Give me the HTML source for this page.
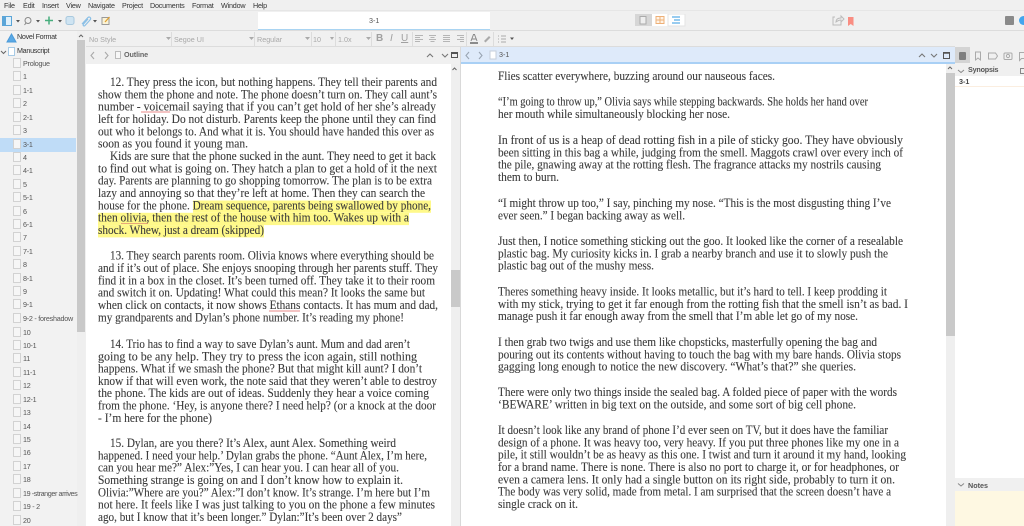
<!DOCTYPE html>
<html><head><meta charset="utf-8"><style>
html,body{margin:0;padding:0;width:1024px;height:526px;overflow:hidden;background:#f0f0f0;font-family:"Liberation Sans",sans-serif;color:#444}
#wrap{position:absolute;left:0;top:0;width:1024px;height:526px;overflow:hidden;background:#f0f0f0;filter:blur(.3px)}
.a{position:absolute}
#menu span{position:absolute;top:1px;font-size:7.2px;color:#333;line-height:9px;letter-spacing:-.2px}
#binder div{position:absolute;left:23px;font-size:7.2px;color:#555;line-height:10px;white-space:nowrap;letter-spacing:-.25px}
#binder div:before{content:"";position:absolute;left:-10px;top:-1px;width:6px;height:8px;border:1px solid #d2d2d2;background:#f6f6f6}
.fb{position:absolute;top:35px;font-size:7.2px;color:#a8a8a8;line-height:9px}
svg text{font-family:"Liberation Serif",serif;font-size:12.4px;fill:#3a3a3a;stroke:#3a3a3a;stroke-width:.1px}
.sep{position:absolute;top:32px;height:14px;width:1px;background:#dcdcdc}
</style></head><body><div id="wrap">
<div id="menu">
<span style="left:4px">File</span><span style="left:23px">Edit</span><span style="left:42px">Insert</span><span style="left:66px">View</span><span style="left:88px">Navigate</span><span style="left:122px">Project</span><span style="left:150px">Documents</span><span style="left:192px">Format</span><span style="left:221px">Window</span><span style="left:253px">Help</span>
</div>
<div class="a" style="left:0;top:10px;width:1024px;height:1px;background:#e6e6e6"></div>
<div class="a" style="left:0;top:30px;width:1024px;height:1px;background:#dcdcdc"></div>
<div class="a" style="left:258px;top:12px;width:232px;height:17px;background:#fff;border-bottom:1px solid #a9d4f2"></div>
<div class="a" style="left:369px;top:16px;font-size:7.2px;color:#555">3-1</div>
<!-- toolbar icons -->
<svg class="a" style="left:0;top:11px" width="120" height="20" viewBox="0 0 120 20">
<rect x="2.500" y="5.500" width="9" height="9" fill="#dff0fb" stroke="#5aa5d8"/><rect x="3" y="6" width="3" height="8" fill="#5aa5d8"/>
<path d="M16 9h4l-2 2.500z" fill="#555"/>
<circle cx="28" cy="9.500" r="3" fill="none" stroke="#888"/><path d="M26 12l-1.500 2" stroke="#888"/>
<path d="M36 9h4l-2 2.500z" fill="#555"/>
<path d="M49 5.500v8M45 9.500h8" stroke="#47ad7d" stroke-width="1.500"/>
<path d="M58 9h4l-2 2.500z" fill="#555"/>
<rect x="66" y="5.500" width="8" height="8" rx="2" fill="#cfe4f2" stroke="#a9c9de"/>
<path d="M82 13l6-6.500c2-1.500 3.500 1 2 2.500l-5 5.500c-1 1-2.500 0-1.500-1.500l4.500-5" fill="none" stroke="#8cc0e6" stroke-width="1.200"/>
<path d="M93 9h4l-2 2.500z" fill="#555"/>
<rect x="102" y="6.500" width="7" height="7" fill="#fbf3d5" stroke="#999"/><path d="M105 11l4.500-5" stroke="#e0a030" stroke-width="1.300"/>
</svg>
<svg class="a" style="left:635px;top:14px" width="52" height="13" viewBox="0 0 52 13">
<rect width="17" height="12" fill="#d6d6d6"/><rect x="17" width="16" height="12" fill="#fff"/><rect x="33" width="17" height="12" fill="#fff" stroke="#e3e3e3"/>
<rect x="5" y="2.500" width="6" height="7.500" fill="#eee" stroke="#aaa"/>
<rect x="21" y="2.500" width="8" height="7" fill="#fff3e6" stroke="#eeb078"/><path d="M25 2.500v7M21 6h8" stroke="#eeb078"/>
<path d="M37 3h8M39 6h6M37 9h8" stroke="#5aaee8" stroke-width="1.200"/>
</svg>
<svg class="a" style="left:830px;top:14px" width="28" height="14" viewBox="0 0 28 14">
<path d="M5 3H3v8h8V8M6 8c0-3 2-4 5-4V2l3 3-3 3V6c-2 0-3 .5-5 2z" fill="none" stroke="#bbb"/>
<path d="M18 3h5.500v9l-2.750-2-2.750 2z" fill="#f98d82"/>
</svg>
<div class="a" style="left:1005px;top:16px;width:9px;height:9px;background:#8a8a8a;border-radius:1px"></div>
<div class="a" style="left:1019px;top:16px;width:9px;height:9px;background:#43a5ee;border-radius:50%"></div>
<!-- format bar -->
<div class="a" style="left:86px;top:31px;width:869px;height:15px;background:#f0f0f0;border-bottom:1px solid #dcdcdc"></div>
<span class="fb" style="left:89px">No Style</span><span class="fb" style="left:174px">Segoe UI</span><span class="fb" style="left:257px">Regular</span><span class="fb" style="left:313px">10</span><span class="fb" style="left:338px">1.0x</span>
<div class="sep" style="left:171px"></div><div class="sep" style="left:254px"></div><div class="sep" style="left:311px"></div><div class="sep" style="left:335px"></div><div class="sep" style="left:371px"></div><div class="sep" style="left:412px"></div><div class="sep" style="left:466px"></div><div class="sep" style="left:493px"></div>
<svg class="a" style="left:160px;top:34px" width="220" height="10" viewBox="0 0 220 10">
<path d="M6 3h5l-2.500 3zM89 3h5l-2.500 3zM145 3h5l-2.500 3zM170 3h4l-2 3zM206 3h5l-2.500 3z" fill="#aaa"/>
</svg>
<span class="a" style="left:376px;top:33px;font-size:10px;font-weight:bold;color:#a0a0a0">B</span>
<span class="a" style="left:390px;top:33px;font-size:10px;font-style:italic;color:#a0a0a0">I</span>
<span class="a" style="left:401px;top:33px;font-size:10px;text-decoration:underline;color:#a0a0a0">U</span>
<svg class="a" style="left:414px;top:32px" width="100" height="14" viewBox="0 0 100 14">
<path d="M1 3.500h8M1 5.500h5M1 7.500h8M1 9.500h5M15 3.500h7M16.500 5.500h4M15 7.500h7M16.500 9.500h4M29 3.500h7M29 5.500h7M29 7.500h7M29 9.500h7M43 3.500h7M46 5.500h4M43 7.500h7M46 9.500h4" stroke="#b5b5b5"/>
<path d="M57 9l2.500-6.500h1L63 9M58 7h4" fill="none" stroke="#888"/><path d="M56 11h8" stroke="#555" stroke-width="1.300"/>
<path d="M70 9l5-5 1.500 1.500-5 5z" fill="#aaa"/>
<path d="M84 4h1M87 4h5M84 7h1M87 7h5M84 10h1M87 10h5" stroke="#aaa"/><path d="M96 5.500h4l-2 2.500z" fill="#555"/>
</svg>
<!-- binder -->
<div class="a" style="left:0;top:31px;width:77px;height:495px;background:#f2f2f2"></div>
<div class="a" style="left:0;top:138px;width:76px;height:14px;background:#bfdcf7"></div>
<div class="a" style="left:77px;top:31px;width:8px;height:495px;background:#efefef"></div>
<div class="a" style="left:77px;top:40px;width:8px;height:292px;background:#c9c9c9"></div>
<svg class="a" style="left:0;top:31px" width="86" height="30" viewBox="0 0 86 30">
<path d="M7 11l4.500-8 4.500 8z" fill="#5aa9e6" stroke="#4b9ad8"/>
<path d="M1 20l2.500 2.500L6 20" fill="none" stroke="#666"/>
<rect x="8.500" y="16.500" width="6" height="8" fill="#fff" stroke="#a8cbe6"/>
<path d="M79 6l2-2 2 2" fill="none" stroke="#666"/>
</svg>
<div class="a" style="left:17px;top:32px;font-size:7.2px;color:#333;line-height:10px;letter-spacing:-.3px">Novel Format</div>
<div class="a" style="left:17px;top:46px;font-size:7.2px;color:#333;line-height:10px;letter-spacing:-.3px">Manuscript</div>
<div id="binder">
<div style="top:59px">Prologue</div><div style="top:72px">1</div><div style="top:86px">1-1</div><div style="top:99px">2</div><div style="top:113px">2-1</div><div style="top:126px">3</div><div style="top:140px">3-1</div><div style="top:153px">4</div><div style="top:166px">4-1</div><div style="top:180px">5</div><div style="top:193px">5-1</div><div style="top:207px">6</div><div style="top:220px">6-1</div><div style="top:233px">7</div><div style="top:247px">7-1</div><div style="top:260px">8</div><div style="top:274px">8-1</div><div style="top:287px">9</div><div style="top:300px">9-1</div><div style="top:314px">9-2 - foreshadow</div><div style="top:328px">10</div><div style="top:341px">10-1</div><div style="top:354px">11</div><div style="top:368px">11-1</div><div style="top:381px">12</div><div style="top:395px">12-1</div><div style="top:408px">13</div><div style="top:422px">14</div><div style="top:435px">15</div><div style="top:448px">16</div><div style="top:462px">17</div><div style="top:475px">18</div><div style="top:489px;letter-spacing:-.4px">19 -stranger arrives</div><div style="top:502px">19 - 2</div><div style="top:516px">20</div>
</div>
<!-- left editor -->
<div class="a" style="left:86px;top:47px;width:365px;height:16px;background:#f0f0f0"></div>
<div class="a" style="left:86px;top:64px;width:365px;height:462px;background:#fff"></div>
<div class="a" style="left:451px;top:64px;width:9px;height:462px;background:#efefef"></div>
<div class="a" style="left:451px;top:270px;width:9px;height:37px;background:#c9c9c9"></div>
<div class="a" style="left:460px;top:47px;width:1px;height:479px;background:#d9d9d9"></div>
<svg class="a" style="left:86px;top:47px" width="375" height="30" viewBox="0 0 375 30">
<path d="M8 5l-3 3.500 3 3.500M19 5l3 3.500-3 3.500" fill="none" stroke="#aaa" stroke-width="1.100"/>
<rect x="29.500" y="4.500" width="5" height="7" fill="#f7f7f7" stroke="#bbb"/>
<path d="M341 10l3-3 3 3M356 7l3 3 3-3" fill="none" stroke="#777" stroke-width="1.100"/>
<path d="M366.500 23l2-2 2 2" fill="none" stroke="#666"/>
</svg>
<div class="a" style="left:451px;top:52px;width:7px;height:6px;border:1px solid #555;border-top-width:2px;box-sizing:border-box"></div>
<div class="a" style="left:124px;top:50px;font-size:7.2px;font-weight:bold;color:#666;line-height:10px;letter-spacing:-.1px">Outline</div>
<!-- right editor -->
<div class="a" style="left:461px;top:47px;width:494px;height:15px;background:#deeafa"></div>
<div class="a" style="left:461px;top:62px;width:494px;height:1.500px;background:#a9d0f5"></div>
<div class="a" style="left:461px;top:64px;width:485px;height:462px;background:#fff"></div>
<div class="a" style="left:946px;top:64px;width:9px;height:462px;background:#efefef"></div>
<div class="a" style="left:946px;top:73px;width:9px;height:263px;background:#c9c9c9"></div>
<svg class="a" style="left:461px;top:47px" width="494" height="26" viewBox="0 0 494 26">
<path d="M8 5l-3 3.500 3 3.500M18 5l3 3.500-3 3.500" fill="none" stroke="#9aa5b3" stroke-width="1.100"/>
<rect x="29" y="4" width="6" height="8" fill="#fff" stroke="#c5cfdb"/>
<path d="M458 10l3-3 3 3M470 7l3 3 3-3" fill="none" stroke="#777" stroke-width="1.100"/>
<rect x="482.500" y="5.500" width="6" height="6" fill="none" stroke="#555"/><path d="M482 6h7" stroke="#555" stroke-width="1.500"/>
<path d="M487 22l2-2 2 2" fill="none" stroke="#666"/>
</svg>
<div class="a" style="left:499px;top:50px;font-size:7.2px;color:#555;line-height:10px">3-1</div>
<!-- inspector -->
<div class="a" style="left:955px;top:47px;width:69px;height:17px;background:#f0f0f0"></div>
<div class="a" style="left:955px;top:47px;width:15px;height:16px;background:#d4d4d4"></div>
<svg class="a" style="left:955px;top:47px" width="69" height="30" viewBox="0 0 69 30">
<rect x="4" y="5" width="7" height="8" rx="1" fill="#7f7f7f"/>
<path d="M20.500 5h5v8l-2.500-2-2.500 2z" fill="none" stroke="#aaa"/>
<path d="M33.500 6h7l2 3-2 3h-7z" fill="none" stroke="#aaa"/>
<rect x="49" y="6" width="8" height="6.500" rx="1" fill="none" stroke="#aaa"/><circle cx="53" cy="9" r="1.600" fill="none" stroke="#aaa"/>
<path d="M64.500 5.500h5v6h-3l-2 2z" fill="none" stroke="#aaa"/>
<path d="M3 23l3 2.500 3-2.500" fill="none" stroke="#888"/>
<rect x="65.500" y="21.500" width="4" height="5" fill="none" stroke="#888"/>
</svg>
<div class="a" style="left:968px;top:65px;font-size:7.2px;font-weight:bold;color:#555;line-height:10px;letter-spacing:-.2px">Synopsis</div>
<div class="a" style="left:955px;top:76px;width:69px;height:402px;background:#fff"></div>
<div class="a" style="left:955px;top:86px;width:69px;height:1px;background:#fbeee0"></div>
<div class="a" style="left:959px;top:77px;font-size:7.2px;font-weight:bold;color:#444;line-height:10px">3-1</div>
<div class="a" style="left:955px;top:478px;width:69px;height:13px;background:#f0f0f0"></div>
<svg class="a" style="left:955px;top:482px" width="12" height="8"><path d="M3 1.500l3 2.500 3-2.500" fill="none" stroke="#888"/></svg>
<div class="a" style="left:968px;top:481px;font-size:7.2px;font-weight:bold;color:#555;line-height:10px">Notes</div>
<div class="a" style="left:955px;top:491px;width:69px;height:35px;background:#fef8e2"></div>
<!-- text -->
<svg class="a" style="left:0;top:0" width="1024" height="526" viewBox="0 0 1024 526">
<rect x="193" y="200.500" width="238" height="12.300" fill="#fff98a"/>
<rect x="98" y="212.800" width="311" height="12.300" fill="#fff98a"/>
<rect x="98" y="225.100" width="166" height="12.300" fill="#fff98a"/>
<path d="M121 223.500h27" stroke="#e8a878" stroke-width="1"/>
<path d="M269 311h31" stroke="#e88a8a" stroke-width="1"/>
<path d="M141 112h29" stroke="#e88a8a" stroke-width="1"/>
<text x="110" y="86" textLength="327" lengthAdjust="spacingAndGlyphs">12. They press the icon, but nothing happens. They tell their parents and</text>
<text x="98" y="98.300" textLength="339" lengthAdjust="spacingAndGlyphs">show them the phone and note. The phone doesn’t turn on. They call aunt’s</text>
<text x="98" y="110.600" textLength="338" lengthAdjust="spacingAndGlyphs">number - voicemail saying that if you can’t get hold of her she’s already</text>
<text x="98" y="123" textLength="338" lengthAdjust="spacingAndGlyphs">left for holiday. Do not disturb. Parents keep the phone until they can find</text>
<text x="98" y="135.300" textLength="336" lengthAdjust="spacingAndGlyphs">out who it belongs to. And what it is. You should have handed this over as</text>
<text x="98" y="147.600" textLength="150" lengthAdjust="spacingAndGlyphs">soon as you found it young man.</text>
<text x="110" y="160" textLength="326" lengthAdjust="spacingAndGlyphs">Kids are sure that the phone sucked in the aunt. They need to get it back</text>
<text x="98" y="172.300" textLength="339" lengthAdjust="spacingAndGlyphs">to find out what is going on. They hatch a plan to get a hold of it the next</text>
<text x="98" y="184.600" textLength="334" lengthAdjust="spacingAndGlyphs">day. Parents are planning to go shopping tomorrow. The plan is to be extra</text>
<text x="98" y="197" textLength="327" lengthAdjust="spacingAndGlyphs">lazy and annoying so that they’re left at home. Then they can search the</text>
<text x="98" y="209.300" textLength="333" lengthAdjust="spacingAndGlyphs">house for the phone. Dream sequence, parents being swallowed by phone,</text>
<text x="98" y="221.600" textLength="311" lengthAdjust="spacingAndGlyphs">then olivia, then the rest of the house with him too. Wakes up with a</text>
<text x="98" y="234" textLength="166" lengthAdjust="spacingAndGlyphs">shock. Whew, just a dream (skipped)</text>
<text x="110" y="259.500" textLength="324" lengthAdjust="spacingAndGlyphs">13. They search parents room. Olivia knows where everything should be</text>
<text x="98" y="272" textLength="340" lengthAdjust="spacingAndGlyphs">and if it’s out of place. She enjoys snooping through her parents stuff. They</text>
<text x="98" y="284.300" textLength="337" lengthAdjust="spacingAndGlyphs">find it in a box in the closet. It’s been turned off. They take it to their room</text>
<text x="98" y="296.600" textLength="327" lengthAdjust="spacingAndGlyphs">and switch it on. Updating! What could this mean? It looks the same but</text>
<text x="98" y="309" textLength="340" lengthAdjust="spacingAndGlyphs">when click on contacts, it now shows Ethans contacts. It has mum and dad,</text>
<text x="98" y="321.300" textLength="306" lengthAdjust="spacingAndGlyphs">my grandparents and Dylan’s phone number. It’s reading my phone!</text>
<text x="110" y="348" textLength="300" lengthAdjust="spacingAndGlyphs">14. Trio has to find a way to save Dylan’s aunt. Mum and dad aren’t</text>
<text x="98" y="360.300" textLength="319" lengthAdjust="spacingAndGlyphs">going to be any help. They try to press the icon again, still nothing</text>
<text x="98" y="372.600" textLength="324" lengthAdjust="spacingAndGlyphs">happens. What if we smash the phone? But that might kill aunt? I don’t</text>
<text x="98" y="384.900" textLength="339" lengthAdjust="spacingAndGlyphs">know if that will even work, the note said that they weren’t able to destroy</text>
<text x="98" y="397.200" textLength="331" lengthAdjust="spacingAndGlyphs">the phone. The kids are out of ideas. Suddenly they hear a voice coming</text>
<text x="98" y="409.500" textLength="338" lengthAdjust="spacingAndGlyphs">from the phone. ‘Hey, is anyone there? I need help? (or a knock at the door</text>
<text x="98" y="421.800" textLength="114" lengthAdjust="spacingAndGlyphs">- I’m here for the phone)</text>
<text x="110" y="447" textLength="286" lengthAdjust="spacingAndGlyphs">15. Dylan, are you there? It’s Alex, aunt Alex. Something weird</text>
<text x="98" y="459.300" textLength="329" lengthAdjust="spacingAndGlyphs">happened. I need your help.’ Dylan grabs the phone. “Aunt Alex, I’m here,</text>
<text x="98" y="471.600" textLength="301" lengthAdjust="spacingAndGlyphs">can you hear me?” Alex:”Yes, I can hear you. I can hear all of you.</text>
<text x="98" y="484" textLength="305" lengthAdjust="spacingAndGlyphs">Something strange is going on and I don’t know how to explain it.</text>
<text x="98" y="496.300" textLength="332" lengthAdjust="spacingAndGlyphs">Olivia:”Where are you?” Alex:”I don’t know. It’s strange. I’m here but I’m</text>
<text x="98" y="508.600" textLength="337" lengthAdjust="spacingAndGlyphs">not here. It feels like I was just talking to you on the phone a few minutes</text>
<text x="98" y="521" textLength="304" lengthAdjust="spacingAndGlyphs">ago, but I know that it’s been longer.” Dylan:”It’s been over 2 days”</text>

<text x="498" y="80" textLength="277" lengthAdjust="spacingAndGlyphs">Flies scatter everywhere, buzzing around our nauseous faces.</text>
<text x="498" y="105.600" textLength="370" lengthAdjust="spacingAndGlyphs">“I’m going to throw up,” Olivia says while stepping backwards. She holds her hand over</text>
<text x="498" y="118" textLength="232" lengthAdjust="spacingAndGlyphs">her mouth while simultaneously blocking her nose.</text>
<text x="498" y="144" textLength="405" lengthAdjust="spacingAndGlyphs">In front of us is a heap of dead rotting fish in a pile of sticky goo. They have obviously</text>
<text x="498" y="156.300" textLength="405" lengthAdjust="spacingAndGlyphs">been sitting in this bag a while, judging from the smell. Maggots crawl over every inch of</text>
<text x="498" y="168.600" textLength="383" lengthAdjust="spacingAndGlyphs">the pile, gnawing away at the rotting flesh. The fragrance attacks my nostrils causing</text>
<text x="498" y="181" textLength="61" lengthAdjust="spacingAndGlyphs">them to burn.</text>
<text x="498" y="207" textLength="393" lengthAdjust="spacingAndGlyphs">“I might throw up too,” I say, pinching my nose. “This is the most disgusting thing I’ve</text>
<text x="498" y="219.300" textLength="187" lengthAdjust="spacingAndGlyphs">ever seen.” I began backing away as well.</text>
<text x="498" y="245" textLength="405" lengthAdjust="spacingAndGlyphs">Just then, I notice something sticking out the goo. It looked like the corner of a resealable</text>
<text x="498" y="257.300" textLength="390" lengthAdjust="spacingAndGlyphs">plastic bag. My curiosity kicks in. I grab a nearby branch and use it to slowly push the</text>
<text x="498" y="269.600" textLength="156" lengthAdjust="spacingAndGlyphs">plastic bag out of the mushy mess.</text>
<text x="498" y="295.500" textLength="389" lengthAdjust="spacingAndGlyphs">Theres something heavy inside. It looks metallic, but it’s hard to tell. I keep prodding it</text>
<text x="498" y="307.800" textLength="410" lengthAdjust="spacingAndGlyphs">with my stick, trying to get it far enough from the rotting fish that the smell isn’t as bad. I</text>
<text x="498" y="320" textLength="360" lengthAdjust="spacingAndGlyphs">manage push it far enough away from the smell that I’m able let go of my nose.</text>
<text x="498" y="346" textLength="379" lengthAdjust="spacingAndGlyphs">I then grab two twigs and use them like chopsticks, masterfully opening the bag and</text>
<text x="498" y="358.300" textLength="403" lengthAdjust="spacingAndGlyphs">pouring out its contents without having to touch the bag with my bare hands. Olivia stops</text>
<text x="498" y="370.600" textLength="358" lengthAdjust="spacingAndGlyphs">gagging long enough to notice the new discovery. “What’s that?” she queries.</text>
<text x="498" y="396" textLength="399" lengthAdjust="spacingAndGlyphs">There were only two things inside the sealed bag. A folded piece of paper with the words</text>
<text x="498" y="408.300" textLength="358" lengthAdjust="spacingAndGlyphs">‘BEWARE’ written in big text on the outside, and some sort of big cell phone.</text>
<text x="498" y="434" textLength="390" lengthAdjust="spacingAndGlyphs">It doesn’t look like any brand of phone I’d ever seen on TV, but it does have the familiar</text>
<text x="498" y="446.300" textLength="401" lengthAdjust="spacingAndGlyphs">design of a phone. It was heavy too, very heavy. If you put three phones like my one in a</text>
<text x="498" y="458.600" textLength="408" lengthAdjust="spacingAndGlyphs">pile, it still wouldn’t be as heavy as this one. I twist and turn it around it my hand, looking</text>
<text x="498" y="471" textLength="401" lengthAdjust="spacingAndGlyphs">for a brand name. There is none. There is also no port to charge it, or for headphones, or</text>
<text x="498" y="483.300" textLength="397" lengthAdjust="spacingAndGlyphs">even a camera lens. It only had a single button on its right side, probably to turn it on.</text>
<text x="498" y="495.600" textLength="393" lengthAdjust="spacingAndGlyphs">The body was very solid, made from metal. I am surprised that the screen doesn’t have a</text>
<text x="498" y="508" textLength="80" lengthAdjust="spacingAndGlyphs">single crack on it.</text>
</svg>
</div></body></html>
